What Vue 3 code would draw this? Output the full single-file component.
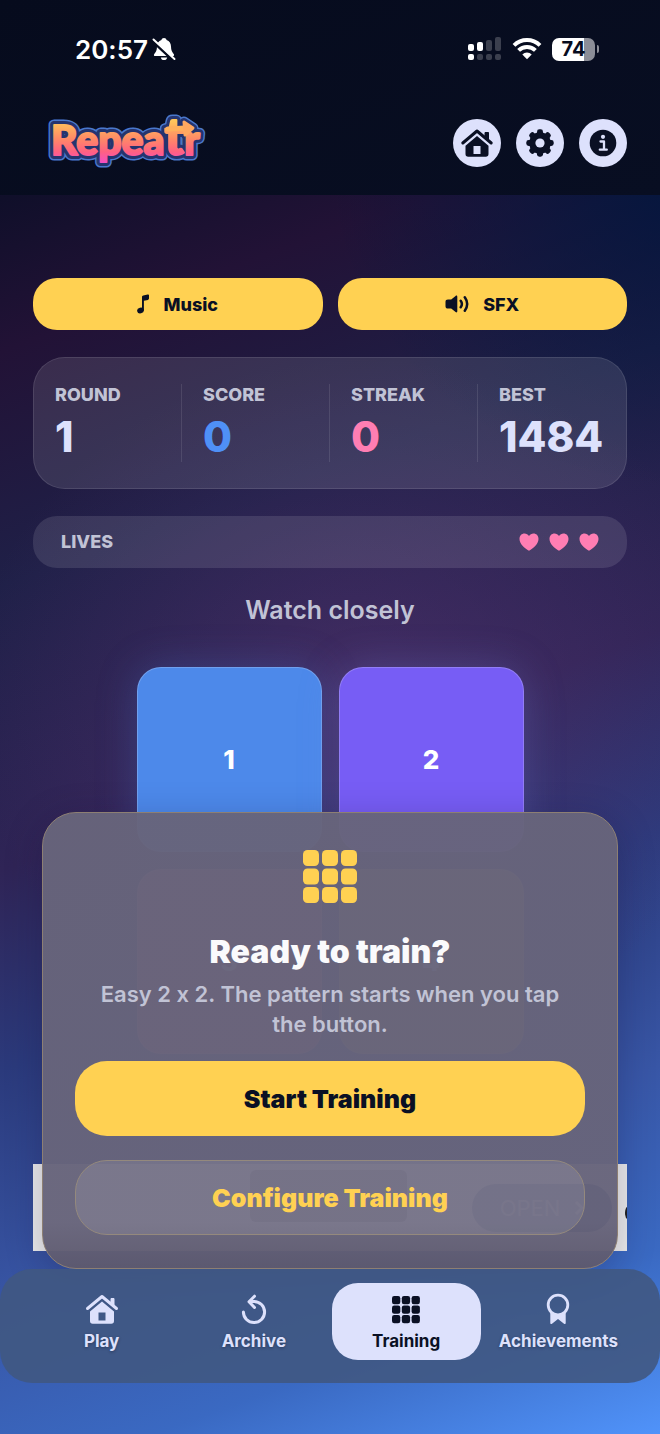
<script setup>
import { ref } from 'vue';

const musicOn = ref(true);
const sfxOn = ref(true);
const showDialog = ref(true);
const activeTab = ref('training');

const stats = [
  { label: 'ROUND', value: 1, tone: 'light' },
  { label: 'SCORE', value: 0, tone: 'blue' },
  { label: 'STREAK', value: 0, tone: 'pink' },
  { label: 'BEST', value: 1484, tone: 'light' }
];

const lives = ref(3);
const tiles = [
  { number: 1, tone: 'blue' },
  { number: 2, tone: 'purple' },
  { number: 3, tone: 'pink' },
  { number: 4, tone: 'yellow' }
];

const tabs = [
  { id: 'play', label: 'Play' },
  { id: 'archive', label: 'Archive' },
  { id: 'training', label: 'Training' },
  { id: 'achievements', label: 'Achievements' }
];

const startTraining = () => {
  showDialog.value = false;
};
</script>

<template>
  <div class="page">
    <header class="header">
      <div class="status">
        <div class="status-left">
          <span class="time">20:57</span>
          <svg width="24" height="26" viewBox="0 0 24 26">
            <path d="M12 2c-1.400 0-2.300.8-2.600 1.900C6.500 5 5 7.400 5 10.500c0 4-1.200 5.600-2.700 7.400-.8 1-.3 2.100.9 2.100h17.600c1.200 0 1.700-1.100.9-2.100-1.500-1.800-2.700-3.400-2.700-7.400 0-3.100-1.500-5.500-4.400-6.600C14.300 2.800 13.400 2 12 2zM8.800 21.500h6.400c-.3 1.600-1.500 2.600-3.200 2.600s-2.900-1-3.200-2.600z" fill="#fff" />
            <path d="M1 5.500 22 25" stroke="#070c1e" stroke-width="3" />
            <path d="M1.500 3.500 22.500 23" stroke="#fff" stroke-width="2" stroke-linecap="round" />
          </svg>
        </div>
        <div class="status-right">
          <svg width="34" height="24" viewBox="0 0 34 24">
            <g fill="#fff">
              <rect x="0" y="7" width="6" height="7" rx="2" />
              <rect x="9" y="5" width="6" height="9" rx="2" />
              <rect x="0" y="17" width="6" height="6" rx="2" />
            </g>
            <g fill="#3b3f4e">
              <rect x="18" y="3" width="6" height="11" rx="2" />
              <rect x="27" y="0" width="6" height="14" rx="2" />
              <rect x="9" y="17" width="6" height="6" rx="2" />
              <rect x="18" y="17" width="6" height="6" rx="2" />
              <rect x="27" y="17" width="6" height="6" rx="2" />
            </g>
          </svg>
          <svg width="30" height="24" viewBox="0 0 30 24">
            <g fill="none" stroke="#fff" stroke-width="4">
              <path d="M2 8.400a18.600 18.600 0 0 1 26 0" />
              <path d="M6.600 13.400a12 12 0 0 1 16.800 0" />
            </g>
            <path d="M15 22.200 10.300 17.500a6.700 6.700 0 0 1 9.400 0z" fill="#fff" />
          </svg>
          <div class="battery">
            <span class="battery-body">74</span>
            <span class="battery-cap"></span>
          </div>
        </div>
      </div>

      <div class="topbar">
        <svg class="logo" width="164" height="60" viewBox="0 0 164 60" role="img" aria-label="Repeatr">
          <defs>
            <linearGradient id="logoFill" gradientUnits="userSpaceOnUse" x1="0" y1="8" x2="0" y2="52">
              <stop offset="0" stop-color="#ffc65a" />
              <stop offset="0.400" stop-color="#ff8a66" />
              <stop offset="0.700" stop-color="#ff6182" />
              <stop offset="1" stop-color="#f24bd0" />
            </linearGradient>
          </defs>
          <!-- outline, inner shade and gradient face share one stack -->
          <text class="logo-text outline" x="5" y="42">Repea<tspan class="tall">t</tspan>r</text>
          <path class="outline" d="M122 15h17M138 9l9 6-8 7z" />
          <text class="logo-text shade" x="5" y="42">Repea<tspan class="tall">t</tspan>r</text>
          <path class="shade" d="M122 15h17M138 9l9 6-8 7z" />
          <text class="logo-text face" x="5" y="42" fill="url(#logoFill)" stroke="url(#logoFill)">Repea<tspan class="tall">t</tspan>r</text>
          <path d="M122 16 139 15" fill="none" stroke="#ffb05c" stroke-width="5" stroke-linecap="round" />
          <path d="M138 9l9 6-8 7z" fill="#ffa860" stroke="#ffa860" stroke-width="3" stroke-linejoin="round" />
        </svg>
        <div class="actions">
          <button class="round-btn" type="button" aria-label="Home">
            <svg width="34" height="32" viewBox="0 0 34 32">
              <path d="M2.800 16 17 4 31.200 16" fill="none" stroke="#0a1024" stroke-width="3" stroke-linecap="round" stroke-linejoin="round" />
              <path d="M25 5.500h3.500V12L25 9z" fill="#0a1024" stroke="#0a1024" stroke-linejoin="round" />
              <path fill-rule="evenodd" d="M17 9 28.500 18.800V27c0 1.700-1 2.700-2.700 2.700H8.200C6.500 29.700 5.500 28.700 5.500 27v-8.200zM13.500 19v8h7v-8z" fill="#0a1024" />
            </svg>
          </button>
          <button class="round-btn" type="button" aria-label="Settings">
            <svg width="30" height="30" viewBox="0 0 30 30">
              <g fill="#0a1024">
                <circle cx="15" cy="15" r="10.800" />
                <rect v-for="n in 8" :key="n" x="12" y="1.300" width="6" height="8" rx="2.400" :transform="`rotate(${n * 45} 15 15)`" />
              </g>
              <circle cx="15" cy="15" r="4.600" fill="#dde1fc" />
            </svg>
          </button>
          <button class="round-btn" type="button" aria-label="Info">
            <svg width="28" height="28" viewBox="0 0 28 28">
              <circle cx="14" cy="14" r="13.300" fill="#0a1024" />
              <circle cx="14" cy="7.800" r="2.100" fill="#dde1fc" />
              <path d="M11.500 12.500H15v8M10.800 20.700h7" fill="none" stroke="#dde1fc" stroke-width="2.300" stroke-linecap="round" stroke-linejoin="round" />
            </svg>
          </button>
        </div>
      </div>
    </header>

    <main class="main">
      <div class="toggles">
        <button class="toggle" type="button" :aria-pressed="musicOn" @click="musicOn = !musicOn">
          <svg width="12" height="20" viewBox="0 0 12 20">
            <ellipse cx="3.500" cy="16.500" rx="3.400" ry="2.800" fill="#0a1024" transform="rotate(-12 3.500 16.500)" />
            <path d="M5 16.500V3.200c0-1 .4-1.500 1.300-1.700L10.600.6c.8-.2 1.400.2 1.400 1v3c0 .7-.4 1.100-1.100 1.300l-4 .9v9.700z" fill="#0a1024" />
          </svg>
          <span>Music</span>
        </button>
        <button class="toggle" type="button" :aria-pressed="sfxOn" @click="sfxOn = !sfxOn">
          <svg width="24" height="18" viewBox="0 0 24 18">
            <path d="M3 4.500h3.200L10.600.9c.8-.6 1.700-.2 1.700.8v14.600c0 1-.9 1.400-1.700.8L6.200 13.500H3c-1.600 0-2.500-.8-2.500-2.300V6.800C.5 5.300 1.400 4.500 3 4.500z" fill="#0a1024" />
            <path d="M15.700 5.800c1.500 2 1.500 4.400 0 6.400M19.800 2.300c3 4.200 3 9.200 0 13.400" fill="none" stroke="#0a1024" stroke-width="2.500" stroke-linecap="round" />
          </svg>
          <span>SFX</span>
        </button>
      </div>

      <section class="stats">
        <div v-for="stat in stats" :key="stat.label" class="stat">
          <span class="label">{{ stat.label }}</span>
          <span class="value" :class="stat.tone">{{ stat.value }}</span>
        </div>
      </section>

      <section class="lives">
        <span class="label">LIVES</span>
        <div class="hearts">
          <svg v-for="n in lives" :key="n" width="20" height="18" viewBox="0 0 20 18">
            <path d="M10 17.700C5.500 15 .5 10.800.5 5.900.5 2.700 2.700.5 5.500.5 7.400.5 9 1.400 10 3 11 1.400 12.600.5 14.500.5c2.800 0 5 2.200 5 5.400 0 4.900-5 9.100-9.500 11.800z" fill="#ff7eb3" />
          </svg>
        </div>
      </section>

      <h1 class="prompt">Watch closely</h1>

      <div class="board">
        <button v-for="tile in tiles" :key="tile.number" class="tile" :class="tile.tone" type="button">
          {{ tile.number }}
        </button>
      </div>

      <aside class="ad">
        <span class="ad-block"></span>
        <a class="ad-open" href="#">OPEN
          <svg width="10" height="16" viewBox="0 0 10 16"><path d="M2 2l6 6-6 6" fill="none" stroke="#a8b4c8" stroke-width="3" /></svg>
        </a>
      </aside>

      <!-- Training dialog over the board -->
      <div v-if="showDialog" class="dialog" role="dialog" aria-labelledby="dialog-title">
        <svg width="54" height="54" viewBox="0 0 54 54">
          <rect v-for="n in 9" :key="n" :x="((n - 1) % 3) * 19" :y="Math.floor((n - 1) / 3) * 18.500" width="16" height="16" rx="4.500" fill="#ffd152" />
        </svg>
        <h2 id="dialog-title">Ready to train?</h2>
        <p>Easy 2 x 2. The pattern starts when you tap the button.</p>
        <button class="dialog-btn primary" type="button" @click="startTraining">Start Training</button>
        <button class="dialog-btn secondary" type="button">Configure Training</button>
      </div>
    </main>

    <nav class="nav">
      <button
        v-for="tab in tabs"
        :key="tab.id"
        class="tab"
        :class="{ active: activeTab === tab.id }"
        type="button"
        @click="activeTab = tab.id"
      >
        <svg v-if="tab.id === 'play'" width="34" height="32" viewBox="0 0 34 32">
          <path d="M2.500 15.500 17 3.500 31.500 15.500" fill="none" stroke="currentColor" stroke-width="3" stroke-linecap="round" stroke-linejoin="round" />
          <path d="M26 5.500h3V12L26 9.500z" fill="currentColor" stroke="currentColor" stroke-linejoin="round" />
          <path fill-rule="evenodd" d="M17 8.500 29 18.500V28c0 1.700-1 2.700-2.700 2.700H7.700C6 30.700 5 29.700 5 28v-9.500zM13.500 19.500v8h7v-8z" fill="currentColor" />
        </svg>
        <svg v-else-if="tab.id === 'archive'" width="32" height="32" viewBox="0 0 32 32">
          <path d="M5.400 19A10.600 10.600 0 1 0 16 8.400h-4" fill="none" stroke="currentColor" stroke-width="3" stroke-linecap="round" />
          <path d="M16.500 3.200 11 8.700l5.500 5.800" fill="none" stroke="currentColor" stroke-width="3" stroke-linecap="round" stroke-linejoin="round" />
        </svg>
        <svg v-else-if="tab.id === 'training'" width="32" height="32" viewBox="0 0 32 32">
          <rect v-for="n in 9" :key="n" :x="2 + ((n - 1) % 3) * 9.800" :y="3 + Math.floor((n - 1) / 3) * 9.500" width="8.300" height="8.300" rx="2.200" fill="currentColor" />
        </svg>
        <svg v-else width="32" height="32" viewBox="0 0 32 32">
          <circle cx="16" cy="12" r="9.800" fill="none" stroke="currentColor" stroke-width="2.800" />
          <path d="M8.300 19c4.600 3.200 10.800 3.200 15.400 0V30c0 1-1 1.300-1.700.7L16 26l-6 4.700c-.7.600-1.700.3-1.700-.7z" fill="currentColor" />
        </svg>
        <span>{{ tab.label }}</span>
      </button>
    </nav>
  </div>
</template>

<style>
body {
  margin: 0;
  background: #070b1c;
}
</style>

<style scoped>
.page {
  display: flex;
  flex-direction: column;
  min-height: 100vh;
  box-sizing: border-box;
  padding-bottom: 51px;
  font-family: Inter, "Liberation Sans", sans-serif;
  font-feature-settings: "calt" 0;
  background:
    radial-gradient(ellipse 55% 22% at 105% 12%, rgba(2, 22, 62, 0.95), rgba(2, 22, 62, 0)),
    radial-gradient(ellipse 60% 24% at 55% 49%, rgba(96, 56, 120, 0.45), rgba(96, 56, 120, 0)),
    linear-gradient(160deg, #070b1c 0%, #100f2a 12%, #221236 21%, #1f2048 35%, #2f2456 52%, #2b3a7c 64%, #3856a6 78%, #3a69c2 89%, #5093fa 100%);
}

button {
  font-family: inherit;
  border: none;
  padding: 0;
  cursor: pointer;
}

svg {
  display: block;
  flex: none;
}

.header {
  height: 195px;
  background: linear-gradient(160deg, #060b1d, #080e22);
}

.status {
  display: flex;
  justify-content: space-between;
  align-items: center;
  padding: 32px 61px 0 75px;
  height: 34px;
  color: #fff;
}

.status-left {
  display: flex;
  align-items: center;
  gap: 4px;
}

.time {
  font-size: 26px;
  font-weight: 600;
}

.status-right {
  display: flex;
  align-items: center;
  gap: 10px;
}

.battery {
  display: flex;
  align-items: center;
  gap: 2px;
}

.battery-body {
  width: 43px;
  height: 23px;
  border-radius: 7px;
  background: linear-gradient(90deg, #fff 74%, #8b8d97 74%);
  color: #070c1e;
  font-size: 20px;
  font-weight: 700;
  line-height: 23px;
  text-align: center;
}

.battery-cap {
  width: 2px;
  height: 8px;
  border-radius: 0 4px 4px 0;
  background: #8b8d97;
}

.topbar {
  display: flex;
  justify-content: space-between;
  align-items: center;
  height: 60px;
  margin-top: 47px;
  padding: 0 33px 0 46px;
}

.logo {
  overflow: visible;
}

.logo-text {
  font-family: Lato, sans-serif;
  font-size: 41px;
  font-weight: 900;
}

.tall {
  font-size: 52px;
}

.outline,
.shade,
.face {
  stroke-linejoin: round;
  stroke-linecap: round;
}

.outline {
  fill: #4a78cc;
  stroke: #4a78cc;
  stroke-width: 11px;
}

.shade {
  fill: #25346f;
  stroke: #25346f;
  stroke-width: 8px;
}

.face {
  stroke-width: 2px;
}

.actions {
  display: flex;
  gap: 15px;
}

.round-btn {
  display: flex;
  align-items: center;
  justify-content: center;
  width: 48px;
  height: 48px;
  border-radius: 50%;
  background: #dde1fc;
}

.main {
  position: relative;
  flex: 1;
  display: flex;
  flex-direction: column;
  padding: 83px 33px 18px;
}

.toggles {
  display: grid;
  grid-template-columns: 1fr 1fr;
  gap: 15px;
}

.toggle {
  display: flex;
  align-items: center;
  justify-content: center;
  gap: 14px;
  height: 52px;
  border-radius: 24px;
  background: #ffd152;
  color: #0a1024;
  font-size: 18px;
  font-weight: 800;
}

.stats {
  display: grid;
  grid-template-columns: repeat(4, 1fr);
  margin-top: 27px;
  padding: 26px 0;
  border: 1px solid rgba(255, 255, 255, 0.1);
  border-radius: 32px;
  background: rgba(255, 255, 255, 0.11);
}

.stat {
  display: flex;
  flex-direction: column;
  gap: 10px;
  height: 78px;
  padding-left: 21px;
  border-right: 1px solid rgba(255, 255, 255, 0.1);
}

.stat:last-child {
  border-right: none;
}

.label {
  color: #c1c3d5;
  font-size: 18px;
  font-weight: 800;
  line-height: 22px;
}

.value {
  font-size: 42px;
  font-weight: 800;
  line-height: 42px;
}

.value.light {
  color: #dde1fc;
}

.value.blue {
  color: #4f90f6;
}

.value.pink {
  color: #ff7eb3;
}

.lives {
  display: flex;
  justify-content: space-between;
  align-items: center;
  height: 52px;
  margin-top: 27px;
  padding: 0 28px;
  border-radius: 24px;
  background: rgba(255, 255, 255, 0.11);
}

.hearts {
  display: flex;
  gap: 10px;
}

.prompt {
  margin: 27px 0 42px;
  color: #c1c3d5;
  font-size: 25px;
  font-weight: 600;
  line-height: 30px;
  text-align: center;
}

.board {
  display: grid;
  grid-template-columns: 1fr 1fr;
  gap: 17px;
  width: 387px;
  max-width: 100%;
  margin: 0 auto;
}

.tile {
  box-sizing: border-box;
  aspect-ratio: 1;
  border: 1px solid rgba(255, 255, 255, 0.2);
  border-radius: 24px;
  color: #fff;
  font-size: 26px;
  font-weight: 800;
}

.tile.blue {
  background: #4d89ea;
  box-shadow: 0 0 40px rgba(77, 137, 234, 0.25);
}

.tile.purple {
  background: #775df5;
  box-shadow: 0 0 40px rgba(119, 143, 245, 0.25);
}

.tile.pink {
  background: #c0607f;
}

.tile.yellow {
  background: #b09a5a;
}

.ad {
  position: relative;
  display: flex;
  align-items: center;
  justify-content: flex-end;
  gap: 65px;
  height: 87px;
  margin-top: auto;
  padding-right: 15px;
  overflow: hidden;
  background: #ececec;
}

/* artwork cut off by the banner edge */
.ad::after {
  content: "";
  position: absolute;
  top: 43px;
  right: -3px;
  width: 5px;
  height: 12px;
  border-radius: 50%;
  background: #222;
}

.ad-block {
  width: 157px;
  height: 52px;
  margin-bottom: 24px;
  border-radius: 6px;
  background: #555;
}

.ad-open {
  display: flex;
  align-items: center;
  justify-content: center;
  gap: 14px;
  width: 140px;
  height: 48px;
  border-radius: 24px;
  background: #23467e;
  color: #a8b4c8;
  font-size: 22px;
  text-decoration: none;
}

.dialog {
  position: absolute;
  right: 42px;
  bottom: 0;
  left: 42px;
  display: flex;
  flex-direction: column;
  align-items: center;
  padding: 37px 32px 33px;
  border: 1px solid #8d7f73;
  border-radius: 34px;
  background: linear-gradient(rgba(103, 100, 123, 0.97) 90%, rgba(93, 89, 110, 0.97));
  box-shadow: 0 8px 36px rgba(20, 15, 50, 0.25);
  text-align: center;
}

.dialog h2 {
  margin: 28px 0 7px;
  color: #fafafc;
  font-size: 32px;
  font-weight: 900;
  line-height: 40px;
}

.dialog p {
  margin: 0 0 22px;
  padding: 0 16px;
  color: #c1c3d5;
  font-size: 22px;
  font-weight: 600;
  line-height: 30px;
}

.dialog-btn {
  box-sizing: border-box;
  width: 100%;
  height: 75px;
  border-radius: 32px;
  font-size: 25px;
  font-weight: 900;
}

.dialog-btn.primary {
  background: #ffd152;
  color: #0a1024;
}

.dialog-btn.secondary {
  margin-top: 24px;
  border: 1px solid #94897d;
  background: rgba(255, 255, 255, 0.1);
  color: #ffd152;
}

.nav {
  position: relative;
  display: grid;
  grid-template-columns: repeat(4, 1fr);
  gap: 3px;
  padding: 14px 27px 23px;
  border-radius: 32px;
  background: rgba(64, 88, 130, 0.9);
}

.tab {
  display: flex;
  flex-direction: column;
  align-items: center;
  gap: 4px;
  height: 77px;
  box-sizing: border-box;
  padding-top: 10px;
  border-radius: 26px;
  background: none;
  color: #dde1fc;
  font-size: 17px;
  font-weight: 700;
  line-height: 24px;
  text-shadow: 0 1px 3px rgba(10, 16, 36, 0.4);
}

.tab.active {
  background: #dde1fc;
  color: #0a1024;
  text-shadow: none;
}
</style>
